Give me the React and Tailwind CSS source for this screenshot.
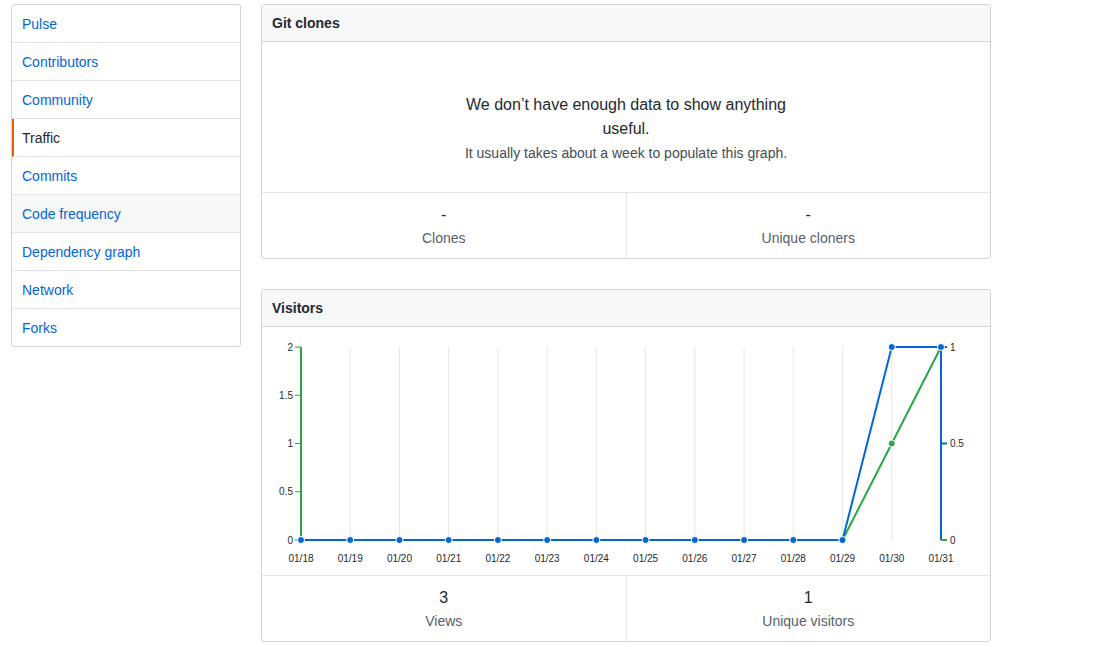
import React from "react";

const navItems = [
  "Pulse",
  "Contributors",
  "Community",
  "Traffic",
  "Commits",
  "Code frequency",
  "Dependency graph",
  "Network",
  "Forks",
];

const dates = [
  "01/18", "01/19", "01/20", "01/21", "01/22", "01/23", "01/24",
  "01/25", "01/26", "01/27", "01/28", "01/29", "01/30", "01/31",
];

// chart geometry (svg coords)
const X0 = 39;
const STEP = 49.23;
const TOP = 20;
const ZERO = 213;
const xAt = (i) => X0 + i * STEP;

const blue = [0, 0, 0, 0, 0, 0, 0, 0, 0, 0, 0, 0, 1, 1];
const green = [0, 0, 0, 0, 0, 0, 0, 0, 0, 0, 0, 0, 0.5, 1];
const yAt = (v) => ZERO - v * (ZERO - TOP);

function Sidebar() {
  return (
    <nav className="self-start w-[230px] shrink-0 border border-[#d1d5da] rounded-[3px] overflow-hidden bg-white">
      {navItems.map((item, i) => {
        const active = item === "Traffic";
        const hover = item === "Code frequency";
        const last = i === navItems.length - 1;
        return (
          <div
            key={item}
            className={`flex items-center pt-[2px] text-[14px] ${
              last ? "h-[37px]" : "h-[38px] border-b border-[#e1e4e8]"
            } ${active ? "border-l-2 border-l-[#e36209] pl-[8px] text-[#24292e]" : "pl-[10px] text-[#0366d6]"} ${
              hover ? "bg-[#f6f8fa]" : ""
            }`}
          >
            {item}
          </div>
        );
      })}
    </nav>
  );
}

function Stat({ value, label, first }) {
  return (
    <div
      className={`flex-1 flex flex-col items-center pt-[11px] ${
        first ? "" : "border-l border-[#e1e4e8]"
      }`}
    >
      <div className="text-[16px] leading-[22px] text-[#24292e]">{value}</div>
      <div className="text-[14px] leading-[24px] text-[#586069]">{label}</div>
    </div>
  );
}

function Box({ title, children }) {
  return (
    <section className="w-[730px] border border-[#d1d5da] rounded-[3px] bg-white overflow-hidden">
      <div className="h-[37px] flex items-center px-[10px] bg-[#f6f8fa] border-b border-[#d1d5da] text-[14px] font-semibold text-[#24292e]">
        {title}
      </div>
      {children}
    </section>
  );
}

function Chart() {
  const blueLine = blue.map((v, i) => `${xAt(i)},${yAt(v)}`).join(" ");
  const greenLine = green.map((v, i) => `${xAt(i)},${yAt(v)}`).join(" ");
  const leftTicks = [
    ["2", 2],
    ["1.5", 1.5],
    ["1", 1],
    ["0.5", 0.5],
    ["0", 0],
  ];
  const rightTicks = [
    ["1", 1, "#0366d6"],
    ["0.5", 0.5, "#0366d6"],
    ["0", 0, "#28a745"],
  ];
  return (
    <svg width="728" height="248" className="block" style={{ fontFamily: "'Liberation Sans', Arial, sans-serif" }}>
      {dates.slice(1, 13).map((d, i) => (
        <line key={d} x1={xAt(i + 1)} x2={xAt(i + 1)} y1={TOP} y2={ZERO} stroke="#e6e6e6" strokeWidth="1" />
      ))}
      {/* left axis */}
      <line x1={X0} x2={X0} y1={TOP} y2={ZERO} stroke="#28a745" strokeWidth="2" />
      {leftTicks.map(([t, v]) => (
        <g key={t}>
          <line x1={X0 - 6} x2={X0} y1={yAt(v / 2)} y2={yAt(v / 2)} stroke="#28a745" strokeWidth="1" />
          <text x={X0 - 8} y={yAt(v / 2) + 3.5} fontSize="10" textAnchor="end" fill="#24292e">
            {t}
          </text>
        </g>
      ))}
      {/* right axis */}
      <line x1={xAt(13)} x2={xAt(13)} y1={TOP} y2={ZERO} stroke="#0366d6" strokeWidth="2" />
      {rightTicks.map(([t, v, c]) => (
        <g key={t}>
          <line x1={xAt(13)} x2={xAt(13) + 6} y1={yAt(v)} y2={yAt(v)} stroke={c} strokeWidth="2" />
          <text x={xAt(13) + 9} y={yAt(v) + 3.5} fontSize="10" fill="#24292e">
            {t}
          </text>
        </g>
      ))}
      <polyline points={greenLine} fill="none" stroke="#28a745" strokeWidth="2" />
      <polyline points={blueLine} fill="none" stroke="#0366d6" strokeWidth="2" />
      <circle cx={xAt(12)} cy={yAt(0.5)} r="3.5" fill="#28a745" stroke="#fff" strokeWidth="1" />
      {blue.map((v, i) => (
        <circle key={i} cx={xAt(i)} cy={yAt(v)} r="3.5" fill="#0366d6" stroke="#fff" strokeWidth="1" />
      ))}
      {dates.map((d, i) => (
        <text key={d} x={xAt(i)} y={235} fontSize="10" textAnchor="middle" fill="#24292e">
          {d}
        </text>
      ))}
    </svg>
  );
}

export default function App() {
  return (
    <div className="min-h-screen bg-white font-['Liberation_Sans',Arial,sans-serif]">
      <div className="flex gap-[20px] pl-[11px] pt-[4px]">
        <Sidebar />
        <div className="flex flex-col gap-[30px]">
          <Box title="Git clones">
            <div className="h-[151px] border-b border-[#e1e4e8] flex flex-col items-center pt-[51px]">
              <p className="w-[350px] text-center text-[16px] leading-[24px] text-[#24292e]">
                We don’t have enough data to show anything useful.
              </p>
              <p className="text-[14px] leading-[24px] text-[#444d56]">
                It usually takes about a week to populate this graph.
              </p>
            </div>
            <div className="flex h-[65px]">
              <Stat value="-" label="Clones" first />
              <Stat value="-" label="Unique cloners" />
            </div>
          </Box>
          <Box title="Visitors">
            <div className="border-b border-[#e1e4e8]">
              <Chart />
            </div>
            <div className="flex h-[65px]">
              <Stat value="3" label="Views" first />
              <Stat value="1" label="Unique visitors" />
            </div>
          </Box>
        </div>
      </div>
    </div>
  );
}
